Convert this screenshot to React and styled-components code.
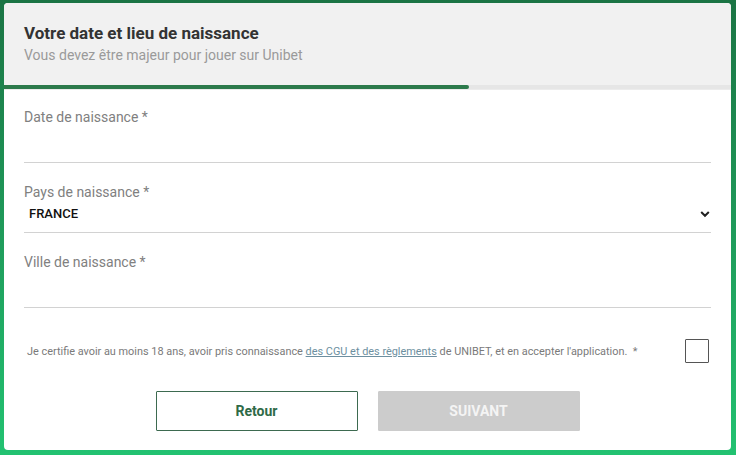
import React from "react";
import styled, { createGlobalStyle } from "styled-components";

const GlobalStyle = createGlobalStyle`
  html, body {
    margin: 0;
    padding: 0;
    width: 736px;
    height: 455px;
    overflow: hidden;
    font-family: Roboto, "Liberation Sans", Arial, sans-serif;
  }
`;

const Backdrop = styled.div`
  width: 736px;
  height: 455px;
  box-sizing: border-box;
  padding: 3px 5px 5px 4px;
  background: linear-gradient(180deg, #1b7444 0%, #1f9a5a 50%, #22c271 100%);
`;

const Card = styled.div`
  height: 100%;
  background: #ffffff;
  border-radius: 4px;
  overflow: hidden;
  display: flex;
  flex-direction: column;
`;

const Header = styled.div`
  background: #f1f1f1;
  padding: 19px 20px 0 20px;
  height: 63px;
`;

const Title = styled.h1`
  margin: 0;
  font-size: 17px;
  font-weight: 700;
  color: #333333;
  line-height: 22px;
`;

const Subtitle = styled.p`
  margin: 1px 0 0 0;
  font-size: 14px;
  color: #9a9a9a;
  line-height: 20px;
`;

const Progress = styled.div`
  height: 4px;
  background: #e6e6e6;
  border-bottom: 1px solid #ececec;
`;

const ProgressFill = styled.div`
  height: 100%;
  background: #2c7a4b;
  border-radius: 0 2px 2px 0;
`;

const Form = styled.div`
  padding: 19px 20px 0 20px;
  display: flex;
  flex-direction: column;
`;

const Field = styled.div`
  height: ${(p) => p.$h}px;
  border-bottom: 1px solid #d2d2d2;
  margin-bottom: ${(p) => p.$mb}px;
`;

const Label = styled.div`
  font-size: 14px;
  color: #808080;
  line-height: 16px;
`;

const Value = styled.div`
  margin-top: 6px;
  padding-left: 5px;
  font-size: 13px;
  font-weight: 500;
  color: #111111;
  display: flex;
  justify-content: space-between;
  align-items: center;
`;

const Chevron = styled.svg`
  width: 10px;
  height: 8px;
  margin-right: 1px;
`;

const Certify = styled.div`
  display: flex;
  align-items: center;
  justify-content: space-between;
  padding: 0 2px 0 3px;
`;

const CertText = styled.p`
  margin: 0;
  font-size: 10.9px;
  color: #7a7a7a;
`;

const Link = styled.a`
  color: #6d8fa0;
  text-decoration: underline;
`;

const Check = styled.span`
  width: 22px;
  height: 22px;
  border: 1px solid #555;
  border-radius: 1px;
  background: #fff;
`;

const Actions = styled.div`
  display: flex;
  justify-content: center;
  gap: 20px;
  margin-top: 28px;
`;

const Button = styled.button`
  width: 202px;
  height: 40px;
  box-sizing: border-box;
  font-family: inherit;
  font-size: 14px;
  font-weight: 700;
  border-radius: 1px;
  border: 1px solid ${(p) => (p.$primary ? "#cccccc" : "#3d6a50")};
  background: ${(p) => (p.$primary ? "#cccccc" : "#ffffff")};
  color: ${(p) => (p.$primary ? "#f4f4f4" : "#2f6a47")};
`;

export default function App() {
  return (
    <>
      <GlobalStyle />
      <Backdrop>
        <Card>
          <Header>
            <Title>Votre date et lieu de naissance</Title>
            <Subtitle>Vous devez être majeur pour jouer sur Unibet</Subtitle>
          </Header>
          <Progress>
            <ProgressFill style={{ width: "64%" }} />
          </Progress>
          <Form>
            <Field $h={53} $mb={21}>
              <Label>Date de naissance *</Label>
            </Field>
            <Field $h={48} $mb={21}>
              <Label>Pays de naissance *</Label>
              <Value>
                FRANCE
                <Chevron viewBox="0 0 10 8">
                  <path d="M1.2 2 L5 5.8 L8.8 2" fill="none" stroke="#222" strokeWidth="2" />
                </Chevron>
              </Value>
            </Field>
            <Field $h={53} $mb={31}>
              <Label>Ville de naissance *</Label>
            </Field>
            <Certify>
              <CertText>
                Je certifie avoir au moins 18 ans, avoir pris connaissance{" "}
                <Link>des CGU et des règlements</Link> de UNIBET, et en accepter l'application.&nbsp; *
              </CertText>
              <Check />
            </Certify>
            <Actions>
              <Button>Retour</Button>
              <Button $primary>SUIVANT</Button>
            </Actions>
          </Form>
        </Card>
      </Backdrop>
    </>
  );
}
